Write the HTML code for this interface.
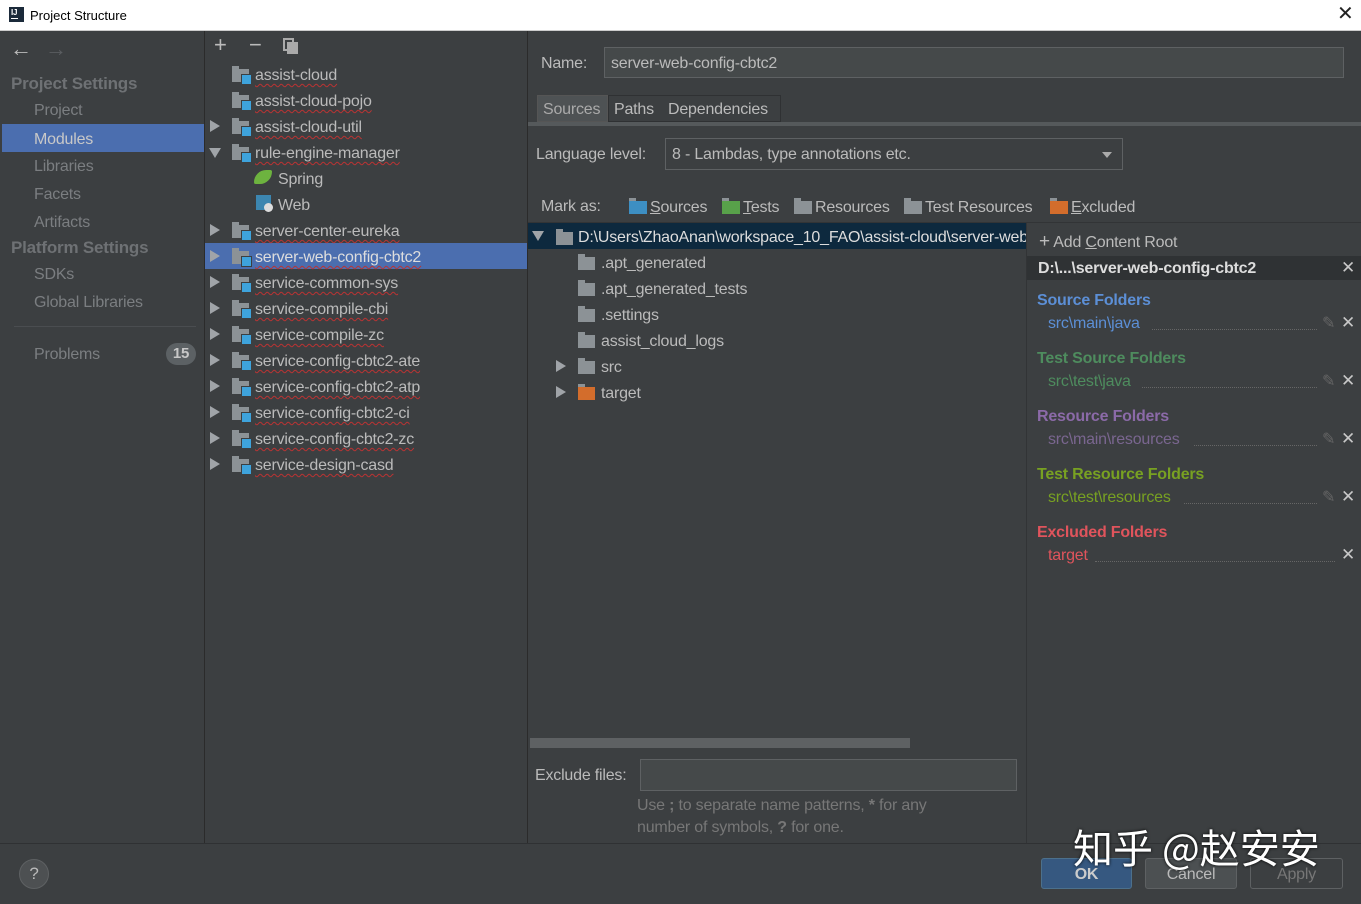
<!DOCTYPE html>
<html><head><meta charset="utf-8"><style>
*{margin:0;padding:0;box-sizing:border-box}
body{width:1361px;height:904px;background:#3c3f41;font-family:"Liberation Sans","Noto Sans CJK SC",sans-serif;font-size:16px;color:#bbbbbb;position:relative;overflow:hidden;letter-spacing:-0.2px}
.a{position:absolute;white-space:nowrap;line-height:22px}
.t{height:26px;line-height:30px}
.wav{text-decoration:underline wavy #b33;text-decoration-thickness:1px;text-underline-offset:3px}
.fold{position:absolute;width:17px;height:13px;background:#8c9296}
.fold:before{content:"";position:absolute;left:0;top:-3px;width:7px;height:3px;background:#8c9296}
.mod:after{content:"";position:absolute;right:-3px;bottom:-3px;width:9px;height:9px;background:#3ea3dc;border:1px solid #3c3f41}
.arr{position:absolute;width:0;height:0;border-top:6px solid transparent;border-bottom:6px solid transparent;border-left:10px solid #a0a4a8}
.down{position:absolute;width:0;height:0;border-left:6px solid transparent;border-right:6px solid transparent;border-top:10px solid #a0a4a8}
.x{position:absolute;color:#c8c8c8;font-size:17px}
.dot{position:absolute;border-bottom:1px dotted #666;height:1px}
</style></head><body>
<!-- title -->
<div class="a" style="left:0;top:0;width:1361px;height:31px;background:#fff;border-bottom:1px solid #ccc"></div>
<div class="a" style="left:9px;top:7px;width:15px;height:15px;background:#1b2a3a"><div style="position:absolute;left:2px;top:2px;color:#fff;font-size:8px;font-weight:bold;line-height:8px">IJ</div><div style="position:absolute;left:2px;top:11px;width:7px;height:1px;background:#fff"></div></div>
<div class="a" style="left:30px;top:5px;font-size:13px;color:#000;letter-spacing:0">Project Structure</div>
<div class="a" style="left:1337px;top:3px;font-size:20px;color:#222">✕</div>
<!-- left panel -->
<div class="a" style="left:204px;top:31px;width:1px;height:812px;background:#2b2b2b"></div>
<div class="a" style="left:10px;top:38px;font-size:22px;color:#bbb">←</div>
<div class="a" style="left:45px;top:38px;font-size:22px;color:#5a5d60">→</div>
<div class="a" style="left:11px;top:73px;font-weight:bold;color:#6e7174;font-size:17px">Project Settings</div>
<div class="a t" style="left:34px;top:96px;color:#7b7e81">Project</div>
<div class="a" style="left:2px;top:124px;width:202px;height:28px;background:#4b6eaf"></div>
<div class="a t" style="left:34px;top:125px;color:#c8c8c8">Modules</div>
<div class="a t" style="left:34px;top:152px;color:#7b7e81">Libraries</div>
<div class="a t" style="left:34px;top:180px;color:#7b7e81">Facets</div>
<div class="a t" style="left:34px;top:208px;color:#7b7e81">Artifacts</div>
<div class="a" style="left:11px;top:237px;font-weight:bold;color:#6e7174;font-size:17px">Platform Settings</div>
<div class="a t" style="left:34px;top:260px;color:#7b7e81">SDKs</div>
<div class="a t" style="left:34px;top:288px;color:#7b7e81">Global Libraries</div>
<div class="a" style="left:14px;top:326px;width:182px;height:1px;background:#4a4d50"></div>
<div class="a t" style="left:34px;top:340px;color:#7b7e81">Problems</div>
<div class="a" style="left:166px;top:343px;width:30px;height:22px;border-radius:11px;background:#5c6164;color:#c8c8c8;font-weight:bold;text-align:center;line-height:22px;font-size:15px">15</div>
<!-- middle tree -->
<div class="a" style="left:214px;top:34px;font-size:22px;color:#bbb">+</div>
<div class="a" style="left:249px;top:34px;font-size:22px;color:#bbb">−</div>
<div class="a" style="left:283px;top:38px;width:11px;height:13px;border:2px solid #aaa"></div>
<div class="a" style="left:287px;top:42px;width:11px;height:12px;background:#aaa"></div>
<div class="a" style="left:205px;top:243px;width:322px;height:26px;background:#4b6eaf"></div>
<div class="fold mod" style="left:232px;top:69px"></div><div class="a t wav" style="left:255px;top:61px">assist-cloud</div>
<div class="fold mod" style="left:232px;top:95px"></div><div class="a t wav" style="left:255px;top:87px">assist-cloud-pojo</div>
<div class="arr" style="left:210px;top:120px"></div><div class="fold mod" style="left:232px;top:121px"></div><div class="a t wav" style="left:255px;top:113px">assist-cloud-util</div>
<div class="down" style="left:209px;top:148px"></div><div class="fold mod" style="left:232px;top:147px"></div><div class="a t wav" style="left:255px;top:139px">rule-engine-manager</div>
<div class="a" style="left:254px;top:170px;width:18px;height:14px;background:#6db33f;border-radius:14px 2px 14px 2px"></div><div class="a t" style="left:278px;top:165px">Spring</div>
<div class="a" style="left:256px;top:195px;width:15px;height:15px;background:#3c86b0"></div><div class="a" style="left:264px;top:203px;width:9px;height:9px;border-radius:50%;background:#ddd"></div><div class="a t" style="left:278px;top:191px">Web</div>
<div class="arr" style="left:210px;top:224px"></div><div class="fold mod" style="left:232px;top:225px"></div><div class="a t wav" style="left:255px;top:217px">server-center-eureka</div>
<div class="arr" style="left:210px;top:250px"></div><div class="fold mod" style="left:232px;top:251px"></div><div class="a t wav" style="left:255px;top:243px;color:#ddd">server-web-config-cbtc2</div>
<div class="arr" style="left:210px;top:276px"></div><div class="fold mod" style="left:232px;top:277px"></div><div class="a t wav" style="left:255px;top:269px">service-common-sys</div>
<div class="arr" style="left:210px;top:302px"></div><div class="fold mod" style="left:232px;top:303px"></div><div class="a t wav" style="left:255px;top:295px">service-compile-cbi</div>
<div class="arr" style="left:210px;top:328px"></div><div class="fold mod" style="left:232px;top:329px"></div><div class="a t wav" style="left:255px;top:321px">service-compile-zc</div>
<div class="arr" style="left:210px;top:354px"></div><div class="fold mod" style="left:232px;top:355px"></div><div class="a t wav" style="left:255px;top:347px">service-config-cbtc2-ate</div>
<div class="arr" style="left:210px;top:380px"></div><div class="fold mod" style="left:232px;top:381px"></div><div class="a t wav" style="left:255px;top:373px">service-config-cbtc2-atp</div>
<div class="arr" style="left:210px;top:406px"></div><div class="fold mod" style="left:232px;top:407px"></div><div class="a t wav" style="left:255px;top:399px">service-config-cbtc2-ci</div>
<div class="arr" style="left:210px;top:432px"></div><div class="fold mod" style="left:232px;top:433px"></div><div class="a t wav" style="left:255px;top:425px">service-config-cbtc2-zc</div>
<div class="arr" style="left:210px;top:458px"></div><div class="fold mod" style="left:232px;top:459px"></div><div class="a t wav" style="left:255px;top:451px">service-design-casd</div>
<div class="a" style="left:527px;top:31px;width:1px;height:812px;background:#2b2b2b"></div>
<!-- right -->
<div class="a" style="left:541px;top:53px">Name:</div>
<div class="a" style="left:604px;top:47px;width:740px;height:31px;background:#45494a;border:1px solid #5e6163;padding-left:6px;line-height:31px">server-web-config-cbtc2</div>
<div class="a" style="left:537px;top:95px;width:71px;height:27px;background:#4e5254;border:1px solid #555"></div>
<div class="a" style="left:608px;top:95px;width:173px;height:27px;background:#3c3f41;border:1px solid #2f3133"></div>
<div class="a" style="left:543px;top:99px;color:#aaa">Sources</div>
<div class="a" style="left:614px;top:99px">Paths</div>
<div class="a" style="left:668px;top:99px">Dependencies</div>
<div class="a" style="left:528px;top:122px;width:833px;height:4px;background:#55595b"></div>
<div class="a" style="left:536px;top:144px">Language level:</div>
<div class="a" style="left:665px;top:138px;width:458px;height:32px;background:#3c3f41;border:1px solid #5e6163;padding-left:6px;line-height:32px">8 - Lambdas, type annotations etc.</div>
<div class="a" style="left:1102px;top:152px;border-left:5px solid transparent;border-right:5px solid transparent;border-top:6px solid #aaa;line-height:0"></div>
<div class="a" style="left:541px;top:196px">Mark as:</div>
<div class="fold" style="left:629px;top:201px;background:#3d8fc3;width:18px"></div><div class="a" style="left:650px;top:197px"><u>S</u>ources</div>
<div class="fold" style="left:722px;top:201px;background:#58a14a;width:18px"></div><div class="a" style="left:743px;top:197px"><u>T</u>ests</div>
<div class="fold" style="left:794px;top:201px;width:18px"></div><div class="a" style="left:815px;top:197px">Resources</div>
<div class="fold" style="left:904px;top:201px;width:18px"></div><div class="a" style="left:925px;top:197px">Test Resources</div>
<div class="fold" style="left:1050px;top:201px;background:#d36d2c;width:18px"></div><div class="a" style="left:1071px;top:197px"><u>E</u>xcluded</div>
<div class="a" style="left:528px;top:222px;width:833px;height:1px;background:#323436"></div>
<div class="a" style="left:528px;top:223px;width:498px;height:26px;background:#0d293e"></div>
<div class="down" style="left:532px;top:231px"></div>
<div class="fold" style="left:556px;top:232px"></div>
<div class="a" style="left:578px;top:227px;width:448px;overflow:hidden;color:#ddd">D:\Users\ZhaoAnan\workspace_10_FAO\assist-cloud\server-web-config-cbtc2</div>
<div class="fold" style="left:578px;top:257px"></div><div class="a" style="left:601px;top:253px">.apt_generated</div>
<div class="fold" style="left:578px;top:283px"></div><div class="a" style="left:601px;top:279px">.apt_generated_tests</div>
<div class="fold" style="left:578px;top:309px"></div><div class="a" style="left:601px;top:305px">.settings</div>
<div class="fold" style="left:578px;top:335px"></div><div class="a" style="left:601px;top:331px">assist_cloud_logs</div>
<div class="arr" style="left:556px;top:360px"></div><div class="fold" style="left:578px;top:361px"></div><div class="a" style="left:601px;top:357px">src</div>
<div class="arr" style="left:556px;top:386px"></div><div class="fold" style="left:578px;top:387px;background:#d36d2c"></div><div class="a" style="left:601px;top:383px">target</div>
<div class="a" style="left:530px;top:738px;width:380px;height:10px;background:#5e6163"></div>
<div class="a" style="left:1026px;top:223px;width:1px;height:620px;background:#323436"></div>
<div class="a" style="left:1039px;top:231px"><span style="font-size:19px">+</span> Add <u>C</u>ontent Root</div>
<div class="a" style="left:1027px;top:256px;width:334px;height:24px;background:#2f3234"></div>
<div class="a" style="left:1038px;top:258px;font-weight:bold;color:#ddd">D:\...\server-web-config-cbtc2</div>
<div class="x" style="left:1341px;top:258px">✕</div>
<div class="a" style="left:1037px;top:290px;font-weight:bold;color:#5c8fd6">Source Folders</div>
<div class="a" style="left:1048px;top:313px;color:#5c8fd6">src\main\java</div><div class="dot" style="left:1152px;top:329px;width:165px"></div>
<div class="a" style="left:1037px;top:348px;font-weight:bold;color:#4e8c5e">Test Source Folders</div>
<div class="a" style="left:1048px;top:371px;color:#4e8c5e">src\test\java</div><div class="dot" style="left:1142px;top:387px;width:175px"></div>
<div class="a" style="left:1037px;top:406px;font-weight:bold;color:#8b6aa8">Resource Folders</div>
<div class="a" style="left:1048px;top:429px;color:#7a6690">src\main\resources</div><div class="dot" style="left:1194px;top:445px;width:123px"></div>
<div class="a" style="left:1037px;top:464px;font-weight:bold;color:#78a122">Test Resource Folders</div>
<div class="a" style="left:1048px;top:487px;color:#78a122">src\test\resources</div><div class="dot" style="left:1184px;top:503px;width:133px"></div>
<div class="a" style="left:1037px;top:522px;font-weight:bold;color:#e0545c">Excluded Folders</div>
<div class="a" style="left:1048px;top:545px;color:#e0545c">target</div><div class="dot" style="left:1095px;top:561px;width:240px"></div>
<div class="a" style="left:1322px;top:313px;color:#666">✎</div><div class="x" style="left:1341px;top:313px">✕</div>
<div class="a" style="left:1322px;top:371px;color:#666">✎</div><div class="x" style="left:1341px;top:371px">✕</div>
<div class="a" style="left:1322px;top:429px;color:#666">✎</div><div class="x" style="left:1341px;top:429px">✕</div>
<div class="a" style="left:1322px;top:487px;color:#666">✎</div><div class="x" style="left:1341px;top:487px">✕</div>
<div class="x" style="left:1341px;top:545px">✕</div>
<div class="a" style="left:535px;top:765px">Exclude files:</div>
<div class="a" style="left:640px;top:759px;width:377px;height:32px;background:#45494a;border:1px solid #5e6163"></div>
<div class="a" style="left:637px;top:795px;color:#777;line-height:22px">Use <b>;</b> to separate name patterns, <b>*</b> for any<br>number of symbols, <b>?</b> for one.</div>
<!-- bottom -->
<div class="a" style="left:0;top:843px;width:1361px;height:1px;background:#2f3133"></div>
<div class="a" style="left:19px;top:859px;width:30px;height:30px;border-radius:50%;background:#4d5052;border:1px solid #5e6163;text-align:center;line-height:28px;color:#bbb;font-size:17px">?</div>
<div class="a" style="left:1041px;top:858px;width:91px;height:31px;background:#365880;border:1px solid #4c708c;border-radius:3px;text-align:center;line-height:32px;font-weight:bold;color:#ccc">OK</div>
<div class="a" style="left:1145px;top:858px;width:92px;height:31px;background:#4c5052;border:1px solid #5e6163;border-radius:3px;text-align:center;line-height:32px;color:#bbb">Cancel</div>
<div class="a" style="left:1250px;top:858px;width:93px;height:31px;background:#3c3f41;border:1px solid #5e6163;border-radius:3px;text-align:center;line-height:32px;color:#777">Apply</div>
<div class="a" style="left:1073px;top:822px;font-size:40px;line-height:48px;color:#fff;font-family:'Noto Sans CJK SC',sans-serif;letter-spacing:0;text-shadow:0 0 3px #000">知乎 @赵安安</div>
</body></html>
